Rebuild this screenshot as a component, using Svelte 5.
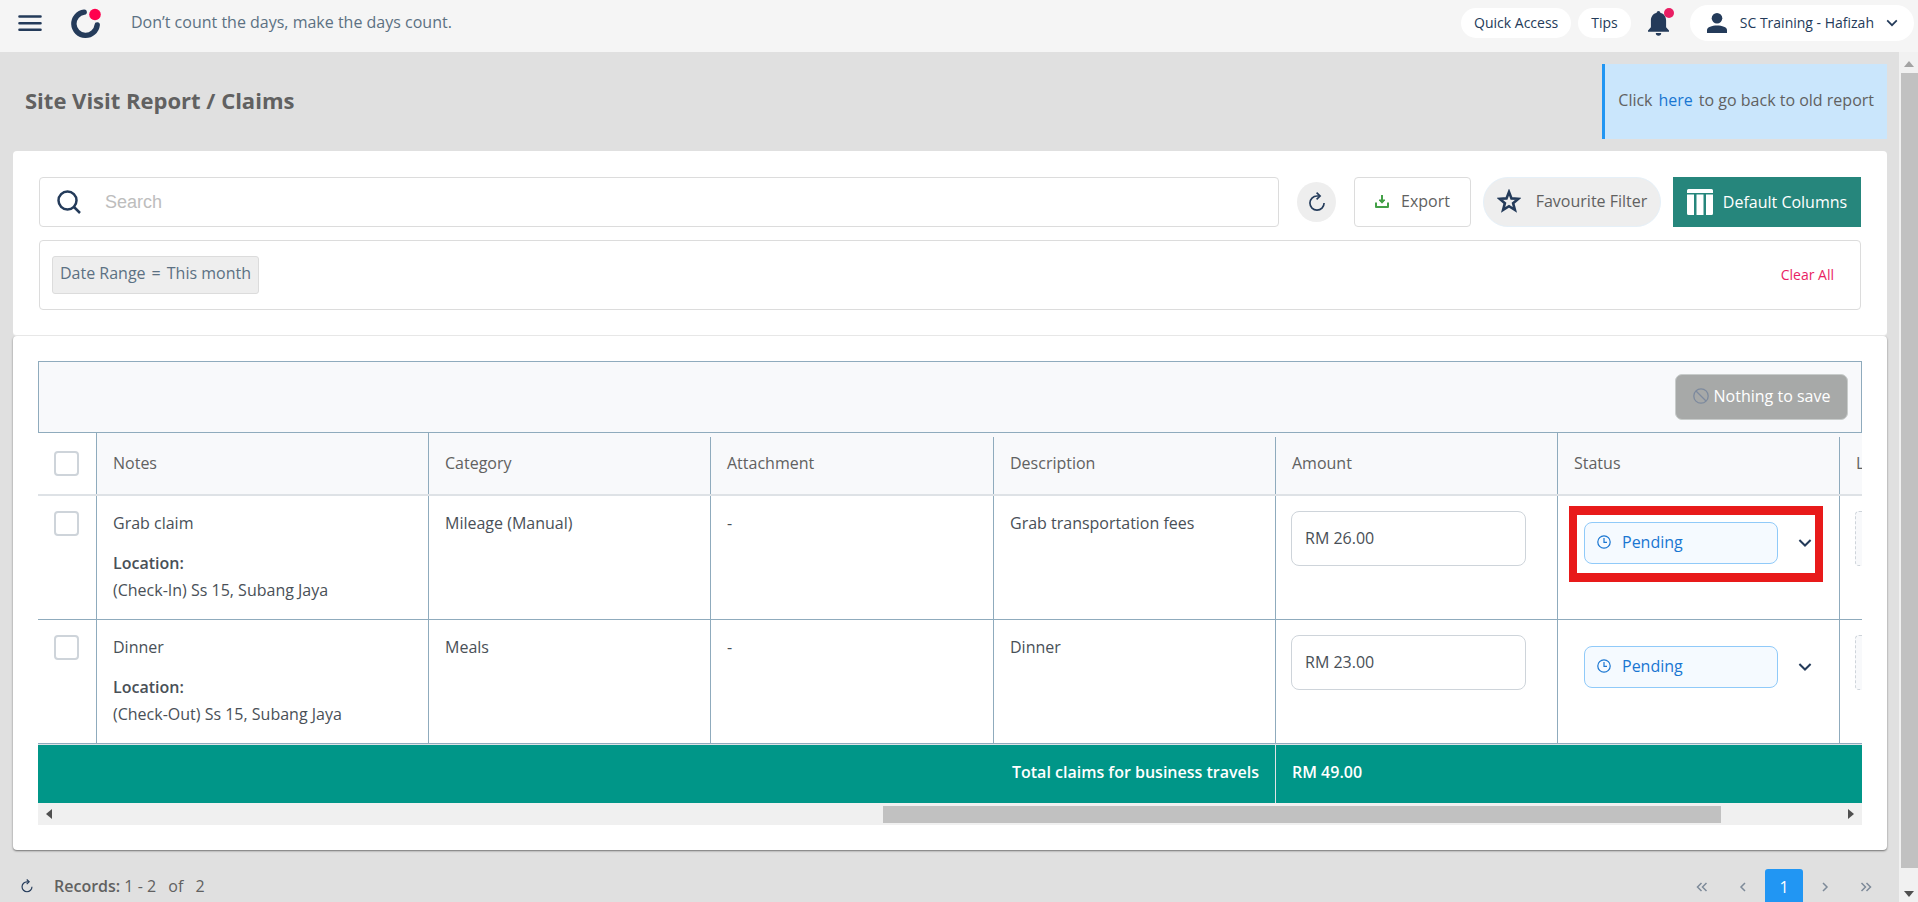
<script>
  const rows = [
    { id: 1, note: 'Grab claim', place: '(Check-In) Ss 15, Subang Jaya', category: 'Mileage (Manual)', description: 'Grab transportation fees', amount: 'RM 26.00', marked: true },
    { id: 2, note: 'Dinner', place: '(Check-Out) Ss 15, Subang Jaya', category: 'Meals', description: 'Dinner', amount: 'RM 23.00', marked: false }
  ];
</script>

{#snippet chevron(size)}
  <svg class="chev" width={size} height={size} viewBox="0 0 12 12"><path d="M1.2 3.4 6 8.2l4.8-4.8" fill="none" stroke="#243b5a" stroke-width="1.7" /></svg>
{/snippet}

{#snippet reload(size)}
  <svg width={size} height={size} viewBox="0 0 24 24" fill="none" stroke="#243b5a" stroke-width="2">
    <path d="M15 4.800H12A8.500 8.500 0 1 0 20.500 13.300" />
    <path d="M11.500 .8l4.200 4-4.200 4" />
  </svg>
{/snippet}

<div class="page">
  <header class="topbar">
    <button class="bare" aria-label="Menu">
      <svg width="24" height="18" viewBox="0 0 24 18"><path d="M1.5 2.5h21M1.5 9.2h21M1.5 15.8h21" stroke="#243b5a" stroke-width="2.6" stroke-linecap="round" /></svg>
    </button>
    <a class="logo" href="#home" aria-label="Home">
      <svg width="32" height="32" viewBox="0 1 32 32">
        <path d="M14.2 6.1A11.7 11.7 0 1 0 27.2 19" fill="none" stroke="#243b5a" stroke-width="5.4" stroke-linecap="round" />
        <circle cx="25" cy="8.5" r="5.8" fill="#ff004e" />
      </svg>
    </a>
    <p class="slogan">Don’t count the days, make the days count.</p>
    <nav class="tools">
      <button class="pill">Quick Access</button>
      <button class="pill">Tips</button>
      <button class="bare bell" aria-label="Notifications">
        <svg width="30" height="32" viewBox="0 2 30 32">
          <path d="M14.5 6c1 0 1.8.8 1.8 1.8 3.600 .9 5.800 4 5.800 7.800v6.700l2.900 3.200v1.300H4v-1.300l2.900-3.200v-6.700c0-3.800 2.200-6.900 5.800-7.800C12.700 6.800 13.500 6 14.500 6z" fill="#243b5a" />
          <path d="M11.800 28h5.400a2.700 2.700 0 0 1-5.400 0z" fill="#243b5a" />
          <circle cx="25" cy="8" r="5" fill="#e91e63" />
        </svg>
      </button>
      <button class="user">
        <svg width="22" height="22" viewBox="0 0 22 22" fill="#243b5a"><circle cx="11" cy="6.300" r="5.300" /><path d="M1 21v-3c0-3 5-4.500 10-4.500s10 1.500 10 4.500v3z" /></svg>
        <span>SC Training - Hafizah</span>
        {@render chevron(12)}
      </button>
    </nav>
  </header>

  <div class="body">
    <main>
      <div class="heading">
        <h1>Site Visit Report / Claims</h1>
        <p class="notice">Click <a href="#old">here</a> to go back to old report</p>
      </div>

      <section class="card filters">
        <div class="bar">
          <label class="search">
            <svg width="24" height="24" viewBox="0 0 24 24" fill="none" stroke="#243b5a" stroke-width="2.500"><circle cx="10.500" cy="10.500" r="9" /><path d="M17 17l6 6" /></svg>
            <input type="text" placeholder="Search" aria-label="Search" />
          </label>
          <button class="round" aria-label="Refresh">{@render reload(20)}</button>
          <button class="export">
            <svg width="14" height="16" viewBox="0 0 14 16" fill="none" stroke="#43a047" stroke-width="2"><path d="M1 9.500V14h12V9.500" stroke-linejoin="round" /><path d="M7 2v6" /><path d="M4 7h6l-3 3.200z" fill="#43a047" stroke-width="1" /></svg>
            Export
          </button>
          <button class="fav">
            <svg width="24" height="24" viewBox="0 0 24 24" fill="none" stroke="#243b5a" stroke-width="2.600"><path d="M12 3l2.500 6.400 6.900.4-5.300 4.400 1.800 6.700L12 17.200l-5.900 3.700 1.800-6.700-5.300-4.400 6.900-.4z" /></svg>
            Favourite Filter
          </button>
          <button class="columns">
            <svg width="26" height="26" viewBox="0 0 26 26" fill="#fff"><path d="M1.500 0h23A1.500 1.500 0 0 1 26 1.500V4H0V1.500A1.500 1.500 0 0 1 1.500 0zM0 5.500h7V26H1.500A1.500 1.500 0 0 1 0 24.500zM9.500 5.500h7V26h-7zM19 5.500h7v19a1.500 1.500 0 0 1-1.500 1.500H19z" /></svg>
            Default Columns
          </button>
        </div>
        <div class="applied">
          <span class="chip"><span>Date Range</span><span>=</span><span>This month</span></span>
          <button class="clear">Clear All</button>
        </div>
      </section>

      <section class="card claims">
        <div class="savebar">
          <button class="save">
            <svg width="16" height="16" viewBox="0 0 16 16" fill="none" stroke="#7d8a9e" stroke-width="1.300"><circle cx="8" cy="8" r="7.200" /><path d="M3 3l10 10" /></svg>
            Nothing to save
          </button>
        </div>
        <div class="scroller">
          <table>
            <colgroup>
              <col class="c-check" /><col class="c-notes" /><col class="c-std" /><col class="c-wide" /><col class="c-std" /><col class="c-std" /><col class="c-std" /><col class="c-std" />
            </colgroup>
            <thead>
              <tr>
                <th class="pick"><input type="checkbox" aria-label="Select all" /></th>
                <th class="full">Notes</th>
                <th>Category</th>
                <th>Attachment</th>
                <th>Description</th>
                <th class="full">Amount</th>
                <th>Status</th>
                <th>L</th>
              </tr>
            </thead>
            <tbody>
              {#each rows as row (row.id)}
                <tr>
                  <td class="pick"><input type="checkbox" aria-label={`Select ${row.note}`} /></td>
                  <td>
                    <p>{row.note}</p>
                    <p class="loc"><b>Location:</b><br />{row.place}</p>
                  </td>
                  <td>{row.category}</td>
                  <td>-</td>
                  <td>{row.description}</td>
                  <td class="field"><input class="amount" type="text" value={row.amount} aria-label="Amount" /></td>
                  <td class="field state">
                    <button class="status">
                      <span class="badge">
                        <svg width="14" height="14" viewBox="0 0 14 14" fill="none" stroke="#1976d2" stroke-width="1.200"><circle cx="7" cy="7" r="6.200" /><path d="M7 3v4.300h3" /></svg>
                        Pending
                      </span>
                      {@render chevron(14)}
                    </button>
                    {#if row.marked}<span class="marker"></span>{/if}
                  </td>
                  <td class="field"><div class="dashed"></div></td>
                </tr>
              {/each}
            </tbody>
            <tfoot>
              <tr>
                <td colspan="5" class="total">Total claims for business travels</td>
                <td colspan="3">RM 49.00</td>
              </tr>
            </tfoot>
          </table>
        </div>
        <div class="hscroll">
          <svg width="6" height="10" viewBox="0 0 6 10"><path d="M6 0v10L0 5z" fill="#505050" /></svg>
          <div class="htrack"><div class="hthumb"></div></div>
          <svg width="6" height="10" viewBox="0 0 6 10"><path d="M0 0v10l6-5z" fill="#505050" /></svg>
        </div>
      </section>

      <footer>
        <button class="bare" aria-label="Reload records">{@render reload(14)}</button>
        <p class="records"><b>Records:</b> 1 - 2 <span>of</span> <span>2</span></p>
        <nav class="pager" aria-label="Pages">
          <button aria-label="First page"><svg width="12" height="10" viewBox="0 0 12 10"><path d="M5.500 1l-4 4 4 4M10.500 1l-4 4 4 4" /></svg></button>
          <button aria-label="Previous page"><svg width="12" height="10" viewBox="0 0 12 10"><path d="M8 1L4 5l4 4" /></svg></button>
          <button class="current">1</button>
          <button aria-label="Next page"><svg width="12" height="10" viewBox="0 0 12 10"><path d="M4 1l4 4-4 4" /></svg></button>
          <button aria-label="Last page"><svg width="12" height="10" viewBox="0 0 12 10"><path d="M1.500 1l4 4-4 4M6.500 1l4 4-4 4" /></svg></button>
        </nav>
      </footer>
    </main>

    <div class="vscroll">
      <svg width="10" height="6" viewBox="0 0 10 6"><path d="M0 6h10L5 0z" fill="#a3a3a3" /></svg>
      <div class="vthumb"></div>
      <svg width="10" height="6" viewBox="0 0 10 6"><path d="M0 0h10L5 6z" fill="#505050" /></svg>
    </div>
  </div>
</div>

<style>
  :global(body) { margin: 0; background: #e0e0e0; }
  .page, .page :global(*) { box-sizing: border-box; }
  .page { height: 100vh; display: flex; flex-direction: column; overflow: hidden; font: 16px/27px "Open Sans", sans-serif; color: #616161; }
  button, input { font: inherit; color: inherit; margin: 0; }
  button { border: 0; background: none; padding: 0; display: flex; align-items: center; justify-content: center; white-space: nowrap; }
  p, h1 { margin: 0; }
  svg { flex: none; display: block; }

  .topbar { flex: none; display: flex; align-items: center; height: 52px; padding: 0 4px 7px 18px; background: #f5f5f5; }
  .logo { margin: 0 29px 0 28px; }
  .slogan { color: #5c7183; }
  .tools { margin-left: auto; display: flex; align-items: center; gap: 7px; font-size: 14px; color: #243b5a; }
  .pill { height: 30px; padding: 0 13px; border-radius: 15px; background: #fff; }
  .bell { margin: 0 9px 0 6px; }
  .user { height: 36px; padding: 0 16px; gap: 12px; border-radius: 18px; background: #fff; }

  .body { flex: 1; min-height: 0; display: flex; }
  main { flex: 1; min-width: 0; padding: 12px 12px 0 13px; overflow: hidden; }
  .heading { display: flex; justify-content: space-between; align-items: center; height: 75px; margin-bottom: 12px; padding-left: 12px; }
  h1 { padding-bottom: 4px; font-size: 22px; line-height: 32px; font-weight: 700; }
  .notice { align-self: stretch; display: flex; align-items: center; gap: 6px; padding: 0 13px 2px; border-left: 3px solid #2196f3; background: #cae6fc; }
  .notice a { color: #1976d2; text-decoration: none; }

  .card { border-radius: 4px; background: #fff; }
  .filters { padding: 26px 26px 25px; border-bottom: 1px solid #eee; }
  .bar { display: flex; align-items: center; gap: 12px; }
  .search { flex: 1; display: flex; align-items: center; height: 50px; padding: 0 17px; gap: 24px; border: 1px solid #dcdcdc; border-radius: 4px; }
  .search input { flex: 1; min-width: 0; border: 0; outline: 0; padding: 0; background: none; font: 18px/24px "Liberation Sans", Arial, sans-serif; }
  .search input::placeholder { color: #bdbdbd; opacity: 1; }
  .round { width: 39px; height: 40px; margin: 0 6px; border-radius: 50%; background: #eee; }
  .export { width: 117px; height: 50px; gap: 12px; padding-bottom: 2px; border: 1px solid #dcdcdc; border-radius: 4px; }
  .fav { width: 178px; height: 50px; gap: 15px; padding-bottom: 2px; border: 1px solid #e6f0f8; border-radius: 25px; background: #eee; }
  .columns { width: 188px; height: 50px; gap: 10px; background: #26867c; color: #fff; font-weight: 500; }
  .applied { display: flex; align-items: center; justify-content: space-between; height: 70px; margin-top: 13px; padding: 0 26px 0 12px; border: 1px solid #dcdcdc; border-radius: 4px; }
  .chip { display: flex; gap: 6px; height: 38px; padding: 3px 7px; border: 1px solid #dcdcdc; border-radius: 3px; background: #eee; color: #5c7183; }
  .clear { padding-bottom: 2px; color: #e91e63; font-size: 14px; }

  .claims { padding: 25px; box-shadow: 0 1px 2px rgba(0, 0, 0, .5); }
  .savebar { display: flex; align-items: center; justify-content: flex-end; height: 72px; padding: 0 13px; border: 1px solid #8fabbd; background: #f8f9fb; }
  .save { width: 173px; height: 46px; gap: 5px; padding-bottom: 2px; border: 1px solid #c8cccb; border-radius: 7px; background: #a7a9a8; color: #fff; font-weight: 500; }
  .scroller { overflow: hidden; }
  table { table-layout: fixed; width: 2084px; border-collapse: separate; border-spacing: 0; }
  .c-check { width: 59px; }
  .c-notes { width: 332px; }
  .c-std { width: 282px; }
  .c-wide { width: 283px; }
  th { height: 63px; padding: 0 16px; text-align: left; font-weight: 400; border-bottom: 2px solid #dee2e6; background: linear-gradient(#8fabbd, #8fabbd) right 4px / 1px 100% no-repeat #f8f9fb; }
  th.full, th.pick { background-position: right 0; }
  th.pick { background-color: #fff; }
  tbody td { height: 124px; padding: 14px 16px 0; vertical-align: top; color: #495057; border-right: 1px solid #8fabbd; border-bottom: 1px solid #8fabbd; }
  tbody td.field { padding: 15px 15px 0; }
  tbody td.pick { padding-top: 15px; }
  .loc { margin-top: 13px; }
  .pick input { appearance: none; display: block; width: 25px; height: 25px; border: 2px solid #ced4da; border-radius: 4px; background: #fff; }
  .amount { display: block; width: 235px; height: 55px; padding: 0 13px 2px; border: 1px solid #ced4da; border-radius: 8px; background: #fff; outline: 0; }
  .state { position: relative; }
  .status { width: 228px; margin: 11px 0 0 11px; justify-content: space-between; }
  .badge { display: flex; align-items: center; gap: 11px; width: 194px; height: 42px; padding: 0 12px 2px; border: 1px solid #90caf9; border-radius: 8px; background: #f5faff; color: #1976d2; }
  .marker { position: absolute; left: 11px; top: 10px; width: 254px; height: 76px; border: solid #e81a1a; border-width: 9px 8px; pointer-events: none; }
  .dashed { height: 55px; border: 1px dashed #ced4da; border-radius: 4px; background: #f8f9fb; }
  tfoot td { height: 59px; padding: 0 16px 3px; border-top: 1px solid #dee2e6; background: #009688; color: #fff; font-weight: 600; }
  tfoot .total { text-align: right; border-right: 1px solid #dee2e6; }
  b { font-weight: 600; }
  .hscroll { display: flex; align-items: center; height: 22px; padding: 0 8px; background: #f0f0f0; }
  .htrack { flex: 1; display: grid; grid-template-columns: 823fr 838fr 119fr; padding: 0 8px; }
  .hthumb { grid-column: 2; height: 17px; background: #c1c1c1; }

  footer { display: flex; align-items: center; margin-top: 19px; padding: 0 2px 0 7px; height: 34px; }
  .records { margin-left: 20px; }
  .records span { margin-left: 8px; }
  .pager { margin-left: auto; display: flex; align-items: flex-start; height: 34px; gap: 3px; }
  .pager button { width: 38px; height: 36px; border-radius: 3px; }
  .pager path { fill: none; stroke: #7d8a99; stroke-width: 1.500; }
  .pager .current { height: 36px; background: #2196f3; color: #fff; }

  .vscroll { flex: none; display: flex; flex-direction: column; align-items: center; width: 19px; padding: 9px 0 5px; gap: 6px; background: #f1f1f1; }
  .vthumb { flex: 1; width: 17px; margin-bottom: 17px; align-self: flex-end; background: #c1c1c1; }
</style>
